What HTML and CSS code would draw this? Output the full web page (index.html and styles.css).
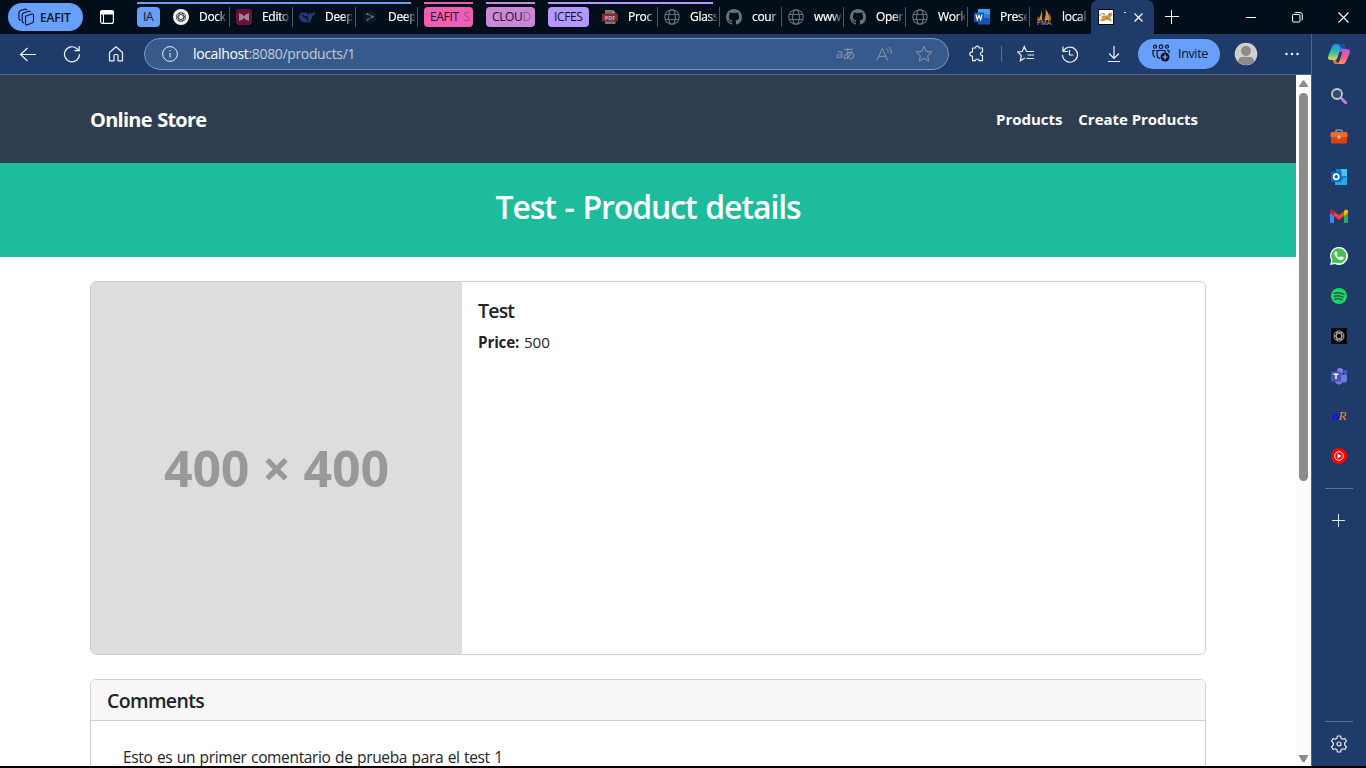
FILE: index.html
```html
<!DOCTYPE html>
<html lang="en">
<head>
<meta charset="utf-8">
<title>Test - Product details</title>
<link rel="stylesheet" href="styles.css">
</head>
<body>
<svg class="defs" width="0" height="0">
  <symbol id="globe" viewBox="0 0 16 16"><g fill="none" stroke="#687279" stroke-width="1.1"><circle cx="8" cy="8" r="7.3"/><ellipse cx="8" cy="8" rx="3.4" ry="7.3"/><path d="M1.2 5.5h13.6M1.2 10.5h13.6"/></g></symbol>
  <symbol id="github" viewBox="0 0 16 16"><path fill="#687279" d="M8 0C3.58 0 0 3.58 0 8c0 3.54 2.29 6.53 5.47 7.59.4.07.55-.17.55-.38 0-.19-.01-.82-.01-1.49-2.01.37-2.53-.49-2.69-.94-.09-.23-.48-.94-.82-1.13-.28-.15-.68-.52-.01-.53.63-.01 1.08.58 1.23.82.72 1.21 1.87.87 2.33.66.07-.52.28-.87.51-1.07-1.78-.2-3.64-.89-3.64-3.95 0-.87.31-1.59.82-2.15-.08-.2-.36-1.02.08-2.12 0 0 .67-.21 2.2.82A7.6 7.6 0 0 1 8 3.87c.68 0 1.36.09 2 .27 1.53-1.04 2.2-.82 2.2-.82.44 1.1.16 1.92.08 2.12.51.56.82 1.27.82 2.15 0 3.07-1.87 3.75-3.65 3.95.29.25.54.73.54 1.48 0 1.07-.01 1.93-.01 2.2 0 .21.15.46.55.38A8.01 8.01 0 0 0 16 8c0-4.42-3.58-8-8-8z"/></symbol>
  <symbol id="knot" viewBox="0 0 16 16"><g fill="none" stroke="currentColor" stroke-width="1.150"><rect x="4.600" y="1" width="6.800" height="14" rx="3.400"/><rect x="4.600" y="1" width="6.800" height="14" rx="3.400" transform="rotate(60 8 8)"/><rect x="4.600" y="1" width="6.800" height="14" rx="3.400" transform="rotate(120 8 8)"/></g></symbol>
</svg>

<div class="browser">
  <header class="tabstrip">
    <div class="workspace">
      <svg width="18" height="18" viewBox="0 0 18 18" fill="none" stroke="#071427" stroke-width="1.1" stroke-linejoin="round"><path d="M8.500 8.200 14.800 6q1.700-.4 1.700 1.200v6q0 1-1 1.500l-5 2q-2 .6-2-1.200z"/><path d="M7 15 5.200 14V7.200q0-1.600 1.300-2.200l5.500-2 1.500.8M3.600 12.500 1.900 11.200V4.800q0-1.400 1.200-2L8.500 1l1.500.7"/></svg>
      <span>EAFIT</span>
    </div>
    <svg class="tab-actions" width="16" height="16" viewBox="0 0 16 16"><rect x="1.600" y="1.600" width="12.800" height="12.800" rx="2" fill="none" stroke="#fff" stroke-width="1.200"/><path d="M1.500 3q0-1.500 1.500-1.500h10q1.500 0 1.500 1.500v2h-13zM4.500 5v9.500" fill="#fff" stroke="#fff"/></svg>

    <div class="group group-blue">
      <span class="chip chip-ia">IA</span>
      <div class="tab tab-wide"><svg width="16" height="16" viewBox="0 0 16 16" color="#333"><circle cx="8" cy="8" r="8" fill="#f5f5f5"/><use href="#knot" x="2.500" y="2.500" width="11" height="11"/></svg><span>Dock</span></div>
      <div class="tab tab-wide"><svg width="16" height="16" viewBox="0 0 16 16"><rect width="16" height="16" rx="3" fill="#6d1037"/><path fill="#98848e" d="m3 4 3.300 1.500L8 7.300l1.700-1.800L13 4v8l-3.200-1.200L8 9l-1.800 1.800L3 12z"/></svg><span>Edito</span></div>
      <div class="tab tab-wide"><svg width="16" height="16" viewBox="0 0 16 16"><path fill="#233979" d="M0 7.500C.2 4 3 3 6 3.800l1-.9 1.200 1.500c1.400.8 2.200 2 3 3.100-1.400-.5-1.800-2.300-1.300-4.200.7 1.200 1.700 1.500 2.700 1.300C13.300 3.600 14.500 3.300 16 2.800c-.1 2.900-1.100 4.100-3 4.300.2 2.600-.7 4.200-2 5.300l1.600 1.200c-1.500.3-2.700-.1-3.600-.7-4.500 1.300-8.700-.5-9-5.400z"/><path d="M2.800 6.400c3.200.2 4.800 4 7 4.800M7 7.200l1.800 1.600" stroke="#07111d" stroke-width="1.100" fill="none"/></svg><span>Deep</span></div>
      <div class="tab"><svg width="16" height="16" viewBox="0 0 16 16"><path fill="#0a1c2c" d="m8 1 6 3.300v7.200L8 15l-6-3.500V4.300z"/><path d="m5.500 5 5 2.800-5 3" fill="none" stroke="#59646c"/><g fill="#6c7880"><circle cx="5.500" cy="5" r="1.100"/><circle cx="10.500" cy="7.800" r="1.200"/><circle cx="5.500" cy="10.800" r="1"/></g></svg><span>Deep</span></div>
    </div>
    <div class="group group-pink"><span class="chip">EAFIT <i>S</i></span></div>
    <div class="group group-orchid"><span class="chip">CLOU<i>D</i></span></div>
    <div class="group group-violet">
      <span class="chip chip-icfes">ICFES</span>
      <div class="tab"><svg width="16" height="16" viewBox="0 0 16 16"><path d="M3 1h8l2.500 3v11H3z" fill="#727679"/><path d="M11 1v3h2.500" fill="#ad9d9d"/><rect y="4.500" width="16" height="8" rx=".8" fill="#842b31"/><text x="8" y="10.800" text-anchor="middle" class="pdf-label">PDF</text></svg><span>Proc</span></div>
      <div class="tab"><svg width="16" height="16"><use href="#globe"/></svg><span>Glass</span></div>
    </div>
    <div class="tab"><svg width="16" height="16"><use href="#github"/></svg><span>cour</span></div>
    <div class="tab"><svg width="16" height="16"><use href="#globe"/></svg><span>www</span></div>
    <div class="tab"><svg width="16" height="16"><use href="#github"/></svg><span>Oper</span></div>
    <div class="tab"><svg width="16" height="16"><use href="#globe"/></svg><span>Work</span></div>
    <div class="tab"><svg width="16" height="16" viewBox="0 0 16 16"><path fill="#3ba4ea" d="M4 0h12v5H4z"/><path fill="#2680d2" d="M4 5h12v4H4z"/><path fill="#1854b1" d="M4 9h12v6.500H4z"/><rect y="3.500" width="10" height="9.500" fill="#1551ae"/><path d="m2 5.700 1.300 5L5 6.300l1.700 4.400 1.300-5" fill="none" stroke="#fff" stroke-width="1.200"/></svg><span>Prese</span></div>
    <div class="tab last-tab"><svg width="16" height="16" viewBox="0 0 16 16"><path fill="#e58a2b" d="M5.500 1q1.200 5 .5 10H2q3.200-4 3.500-10zM9.500 0q4.200 5 3.800 11H8q2.500-4 1.500-11z"/><path fill="#b9631b" d="M13 4q2.200 3 2.200 7h-2zM2.500 6v5H.8z"/><text x="8" y="15.500" text-anchor="middle" class="boat-label">PMA</text></svg><span>local</span></div>
    <div class="active-tab">
      <svg width="16" height="16" viewBox="0 0 16 16"><rect width="16" height="16" fill="#080808"/><rect x="1" y="1" width="14" height="14" fill="#fff"/><path d="m3 8 2-1.500h4l2-1L11 3.200l1.500.8 1.500-.4.300 3-1.800 1.700.5 2 1.300 2.200-2.800-.8-2.700-1-3.500 1.500H3l2-2z" fill="#c79b52"/><path d="M1.500 7 4 4.500l3 1M2 11.500l3-1.500M8 8l2 2M10 5l2 1" stroke="#594124" stroke-width=".7" fill="none"/></svg>
      <span class="title-tip"></span>
      <svg class="tab-close" width="11" height="11" viewBox="0 0 11 11"><path d="m1.500 1.500 8 8m0-8-8 8" stroke="#fff" stroke-width="1.200"/></svg>
    </div>
    <svg class="new-tab" width="14" height="14" viewBox="0 0 14 14"><path d="M0 6.500h14M6.500 0v14" stroke="#fff"/></svg>
    <div class="window-controls">
      <svg width="10" height="10"><path d="M0 5.500h10" stroke="#fff"/></svg>
      <svg width="11" height="11" fill="none" stroke="#fff"><rect x=".5" y="2.500" width="7.500" height="7.500" rx="1"/><path d="M2.500 1q.4-.5 1-.5H8Q10.300.5 10.300 3v4.500q0 .6-.5 1"/></svg>
      <svg width="11" height="11"><path d="m.5.500 10 10m0-10-10 10" stroke="#fff" stroke-width="1.100"/></svg>
    </div>
  </header>

  <div class="workarea">
    <div class="viewport">
      <div class="toolbar">
        <div class="nav-icons">
          <svg width="18" height="18" viewBox="0 0 18 18"><path d="M17 9.500H2M8.500 3l-7 6.500 7 6.500"/></svg>
          <svg width="18" height="18" viewBox="0 0 18 18"><path d="M16.500 9.300A7.500 7.500 0 1 1 14 3.700L16 5.500M16.200 1v4.600h-4.700"/></svg>
          <svg width="18" height="18" viewBox="0 0 18 18"><path d="M2.500 7.500 9 1.800l6.500 5.700v8.300H11v-5.300q0-1-1-1H8q-1 0-1 1v5.300H2.500z" stroke-linejoin="round"/></svg>
        </div>
        <div class="address">
          <svg width="16" height="16" viewBox="0 0 16 16"><circle cx="8" cy="8" r="7.400"/><path d="M8 7v4.500M8 4v1.300"/></svg>
          <span class="url"><b>localhost</b>:8080/products/1</span>
          <span class="translate">aあ</span>
          <svg class="read-aloud" width="17" height="16" viewBox="0 0 17 16"><path d="m1 14.500 5.300-12 5.300 12M3 10.300h6.700M10.500 2.500q2 1.500 1.600 4M13 1q3 2.500 2 6.500"/></svg>
          <svg class="fav" width="18" height="18" viewBox="0 0 18 18"><path d="m9 1.500 2.200 5 5.400.5-4 3.700 1.100 5.400L9 13.300l-4.700 2.800 1.100-5.400-4-3.700 5.400-.5z"/></svg>
        </div>
        <div class="tools">
          <svg width="18" height="18" viewBox="0 0 18 18"><path d="M4.500 3h3q0-1.800 1.800-1.800T11 3h3.500v4q-2 0-2 1.800t2 1.800v5H11q0-1.600-1.700-1.600T7.500 15.600h-3v-4.500q-2.700 0-2.700-2.100t2.700-2.100z" stroke-linejoin="round"/></svg>
          <span class="bar"></span>
          <svg width="18" height="18" viewBox="0 0 18 18"><path d="M9.500 6.500 7.300 1.500l-2 5L.8 7l3.500 3.700-1 5.100L8 13M9.500 6.500H17M10.500 10H17M9.500 13.500H17"/></svg>
          <svg width="18" height="18" viewBox="0 0 18 18"><path d="M2.200 6.500A7.500 7.500 0 1 1 1.500 10M2 1.500v5h5M8.500 5v5h4"/></svg>
          <svg width="18" height="18" viewBox="0 0 18 18"><path d="M9 1v12M4 8.500l5 5 5-5M3 16.500h12"/></svg>
        </div>
        <div class="invite">
          <svg width="18" height="18" viewBox="0 0 18 18" fill="none" stroke="#071427" stroke-width="1.200"><circle cx="3" cy="2.700" r="1.500"/><circle cx="9" cy="2.700" r="1.800"/><circle cx="15" cy="2.700" r="1.500"/><path d="M8 14.500Q5 14 5 11V6.500h8v2M3 6.500H1V10q0 2.500 2 3.200M15 6.500h2V9"/><circle cx="13" cy="13" r="4.500" fill="#071427" stroke="none"/><path d="M13 10.500v5M10.500 13h5" stroke="#8db5ff"/></svg>
          <span>Invite</span>
        </div>
        <svg class="avatar" width="24" height="24" viewBox="0 0 24 24"><circle cx="12" cy="12" r="11.300" fill="#d2d0ce"/><circle cx="12" cy="9" r="5" fill="#8d8b89"/><path d="M4 20q0-5 4.500-5h7q4.500 0 4.500 5-8 6.500-16 0z" fill="#8d8b89"/></svg>
        <svg class="more" width="14" height="4"><g fill="#fff"><circle cx="1.500" cy="2" r="1.200"/><circle cx="7" cy="2" r="1.200"/><circle cx="12.500" cy="2" r="1.200"/></g></svg>
      </div>

      <div class="page-frame">
        <main class="page">
          <nav class="navbar">
            <span class="brand">Online Store</span>
            <div class="links"><span>Products</span><span class="create">Create Products</span></div>
          </nav>
          <div class="masthead"><h2>Test - Product details</h2></div>
          <div class="content">
            <section class="card product">
              <div class="placeholder"><span>400 × 400</span></div>
              <div class="product-body">
                <h5>Test</h5>
                <p><b>Price:</b> <span>500</span></p>
              </div>
            </section>
            <section class="card comments">
              <h5 class="card-header">Comments</h5>
              <p class="comment">Esto es un primer comentario de prueba para el test 1</p>
            </section>
          </div>
        </main>
        <div class="scrollbar">
          <svg width="9" height="7" viewBox="0 0 9 7"><path d="M3.800.5h1.400L9 6v1H0V6z" fill="#8b8b8b"/></svg>
          <div class="thumb"></div>
          <svg width="9" height="7" viewBox="0 0 9 7"><path d="M3.500 7h2L9 1V0H0v1z" fill="#8b8b8b"/></svg>
        </div>
      </div>
    </div>

    <aside class="sidebar">
      <svg class="copilot" width="24" height="24" viewBox="0 0 24 24"><defs><linearGradient id="cool" x2="0" y2="1"><stop stop-color="#208de8"/><stop offset=".5" stop-color="#2abfaf"/><stop offset="1" stop-color="#ebd63a"/></linearGradient><linearGradient id="warm" x2="0" y2="1"><stop stop-color="#b65bec"/><stop offset=".55" stop-color="#f7588d"/><stop offset="1" stop-color="#ff9b50"/></linearGradient></defs><path d="M8 2h7q2 0 2.500 2l.7 2.500H15q-1.500 0-2 1.500l-2.500 8Q10 18 8 18H4q-4 0-2.700-4L5 4.500Q6 2 8 2z" fill="url(#cool)"/><path d="M11.500 2H15q2 0 2.500 2l.7 2.500h-2.700q-1.500 0-2-1.500z" fill="#174da5"/><path d="M16 22H9q-2 0-2.500-2L6 18h2q2 0 2.500-2L13 8.500Q13.500 7 15 7h4.500q4.500 0 3.200 4L19 19.500q-1 2.500-3 2.500z" fill="url(#warm)"/><path d="M6 18h2q2 0 2.500-2l.5-1.500 1 5Q11.500 22 9.500 22 7 22 6.500 20z" fill="#f16a42"/><path d="m10.500 16 2-6 3-.5-3 9.500q-.5 1.500-2 1.800-1.500-.8-1.500-2.800 1-.5 1.500-2z" fill="#1e3b69"/></svg>
      <div class="apps">
        <svg width="18" height="18" viewBox="0 0 18 18"><circle cx="7" cy="7" r="5" fill="#314d72" stroke="#c7c7c7" stroke-width="1.800"/><path d="m10.500 10.500 2.500 2.500" stroke="#bbb" stroke-width="2"/><path d="m12.700 12.700 3 3" stroke="#b77de8" stroke-width="3" stroke-linecap="round"/></svg>
        <svg width="18" height="18" viewBox="0 0 18 18"><path d="M6 5V3.500Q6 3 7 3h4q1 0 1 .5V5" fill="none" stroke="#a9b4ba" stroke-width="1.200"/><path d="M.5 6.500Q.5 5 2 5h14q1.500 0 1.500 1.500V10H.5z" fill="#f36a27"/><path d="M1 10h16v5.500q0 1-1 1H2q-1 0-1-1z" fill="#d8430e"/><circle cx="9" cy="10" r="1.800" fill="#d5c1b8"/></svg>
        <svg width="18" height="18" viewBox="0 0 18 18"><path d="M6 2h11v15H6z" fill="#1386d5"/><path d="M11 2h6v7h-6z" fill="#4ac3f2"/><path d="m5 10 6 3 6-3v8H5z" fill="#2aa9e8"/><rect x="1" y="4.500" width="10.500" height="10.500" rx="1" fill="#0869bd"/><circle cx="6.200" cy="9.700" r="2.600" fill="none" stroke="#fff" stroke-width="1.700"/></svg>
        <svg width="18" height="18" viewBox="0 0 18 18"><path d="M0 4h4v12H1q-1 0-1-1z" fill="#4285f4"/><path d="M14 4h4v11q0 1-1 1h-3z" fill="#34a853"/><path d="M4 4.500 9 8l5-3.500V9l-5 4-5-4z" fill="#ea4335"/><path d="M0 5q0-3.500 3-2l1 1v5L0 6z" fill="#c5221f"/><path d="M18 5q0-3.500-3-2l-1 1v5l4-3z" fill="#fbbc04"/></svg>
        <svg width="18" height="18" viewBox="0 0 18 18"><path d="m0 18 1.200-4.600A9 9 0 1 1 5 17z" fill="#fff"/><path d="m1.700 16.300.9-3.200a7.500 7.500 0 1 1 2.900 2.500z" fill="#3fc351"/><path d="M5.300 4.500q.8-.6 1.400.2l.8 1.800q.1.500-.7 1.300 1 1.900 3 2.700l1-1q.4-.4.900-.1l1.700.9q.5.400 0 1.400-1 1.900-3.300 1.300Q5.700 11.500 4.600 7.500q-.4-1.800.7-3z" fill="#fff"/></svg>
        <svg width="16" height="16" viewBox="0 0 16 16"><circle cx="8" cy="8" r="8" fill="#1ed760"/><path d="M3 5.300q5.300-1.500 10 1M3.500 8.300q4.600-1.200 8.500.9M4 11q3.700-1 7 .8" stroke="#1b4e4e" fill="none" stroke-width="1.400" stroke-linecap="round"/></svg>
        <svg width="16" height="16" viewBox="0 0 16 16" color="#b7b7b7"><rect width="16" height="16" fill="#020407"/><use href="#knot" x="2" y="2" width="12" height="12"/></svg>
        <svg width="18" height="18" viewBox="0 0 18 18"><circle cx="10" cy="4" r="3" fill="#7b83eb"/><circle cx="15.200" cy="5" r="2" fill="#5059c9"/><path d="M12 7.500h5v6q-1 3-4 2zM5 7.500h8v7q-1.500 3-4 3-3 0-4-3z" fill="#6f78df"/><rect x="1" y="4.500" width="10" height="10" rx="1" fill="#4b53bc"/><path d="M3.500 7.200h5M6 7v5" stroke="#fff" stroke-width="1.500"/></svg>
        <span class="word-ref"><b>w</b><i>R</i></span>
        <svg width="16" height="16" viewBox="0 0 16 16"><circle cx="8" cy="8" r="8" fill="#f00"/><circle cx="8" cy="8" r="4.300" fill="none" stroke="#fff"/><path d="m6.500 5.500 4 2.500-4 2.500z" fill="#fff"/></svg>
      </div>
      <span class="divider"></span>
      <svg class="add-app" width="13" height="13"><path d="M0 6.500h13M6.500 0v13" stroke="#dfe6f0"/></svg>
      <span class="divider divider-bottom"></span>
      <svg class="settings" width="18" height="18" viewBox="0 0 18 18" fill="none" stroke="#e8edf4" stroke-width="1.200" stroke-linejoin="round"><path d="M7.500 1h3l.6 2.300 1.500.9 2.300-.7 1.500 2.600L14.700 8v2l1.700 1.900-1.500 2.600-2.300-.7-1.500.9-.6 2.300h-3l-.6-2.300-1.500-.9-2.300.7-1.500-2.600L3.300 10V8L1.600 6.100l1.500-2.600 2.300.7 1.500-.9z"/><circle cx="9" cy="9" r="2"/></svg>
    </aside>
  </div>
</div>
</body>
</html>
```
FILE: styles.css
```css
* { box-sizing: border-box; }
body { margin: 0; font-family: "Open Sans", "Noto Sans CJK JP", sans-serif; color: #212529; background: #000; }
svg { display: block; flex: none; }
.defs { position: absolute; }
h2, h5, p { margin: 0; }
.browser { width: 1366px; height: 768px; overflow: hidden; display: flex; flex-direction: column; padding-bottom: 2px; background: #000; }

/* Tab strip */
.tabstrip { height: 34px; flex: none; display: flex; background: #020e19; color: #fff; font-size: 12px; white-space: nowrap; }
.workspace { width: 75px; height: 28px; margin: 3px 16px 0 8px; padding-left: 9px; border-radius: 14px; background: #689ffa; color: #071427; display: flex; align-items: center; gap: 5px; font-weight: 600; letter-spacing: -0.2px; }
.tab-actions { margin: 9px 22px 0 0; }
.group { display: flex; height: 34px; border-top: 2px solid transparent; position: relative; margin-right: 13px; }
.group::before { content: ""; position: absolute; left: 0; right: 0; top: 0; height: 2px; background: var(--accent); }
.group-blue { --accent: #689ffa; margin-right: 6px; }
.group-blue::before { right: 7px; }
.group-pink { --accent: #ef5db5; }
.group-orchid { --accent: #cd87d8; }
.group-violet { --accent: #b497ff; margin-right: 0; }
.group-violet::before { right: 7px; }
.chip { width: 49px; height: 20px; margin-top: 5px; padding-left: 6px; border-radius: 4px; background: var(--accent); color: #10151e; line-height: 19px; letter-spacing: -0.35px; word-spacing: 2px; }
.chip i { font-style: normal; opacity: 0.35; }
.chip-ia { width: 23px; margin-right: 7px; }
.chip-icfes { width: 41px; margin-right: 7px; }
.tab { width: 62px; height: 20px; margin-top: 7px; padding-left: 6px; display: flex; align-items: center; gap: 10px; border-right: 1px solid #4b555e; }
.group .tab { margin-top: 5px; }
.tab-wide { width: 63px; }
.tab span { width: 27px; letter-spacing: -0.3px; line-height: 20px; -webkit-text-stroke: 0.2px #fff; mask-image: linear-gradient(90deg, #000 65%, #0003 100%); }
.last-tab { width: 61px; border: 0; }
.last-tab span { width: 25px; }
.pdf-label { font: 700 5.500px "Open Sans", sans-serif; fill: #c8c0c0; }
.boat-label { font: 700 6.500px "Open Sans", sans-serif; fill: #777b9a; }
.active-tab { width: 63px; height: 34px; padding: 9px 0 0 7px; display: flex; background: #1e3b69; border-radius: 7px 7px 0 0; }
.title-tip { width: 2px; height: 1px; margin: 3px 7px 0 10px; background: #dbe2ec; }
.tab-close { margin-top: 3px; }
.new-tab { margin: 10px 67px 0 11px; }
.window-controls { display: flex; gap: 35.500px; padding-top: 12px; }

/* Toolbar */
.workarea { display: flex; flex: 1; min-height: 0; }
.viewport { width: 1312px; display: flex; flex-direction: column; border-right: 1px solid #486386; background: #1e3b69; }
.toolbar { height: 41px; flex: none; display: flex; align-items: center; padding: 0 0 1px 19px; border-bottom: 1px solid #526c8e; color: #fff; }
.toolbar svg { fill: none; }
.nav-icons, .tools { display: flex; align-items: center; stroke: #edf2f9; stroke-width: 1.200; }
.nav-icons { gap: 26px; margin-right: 19px; }
.address { width: 805px; height: 32px; border: 1px solid #7d96b9; border-radius: 16px; background: #375a8d; display: flex; align-items: center; padding-left: 17px; stroke: #e8eef5; }
.url { width: 643px; margin-left: 15px; font-size: 14px; letter-spacing: -0.35px; color: #c0cbd8; }
.url b { font-weight: 400; color: #fff; }
.translate { width: 20px; margin-right: 20px; font-size: 13px; line-height: 18px; color: #8c98a6; white-space: nowrap; letter-spacing: -1px; margin-top: -2px; }
.read-aloud, .fav { stroke: #8c98a6; }
.fav { margin-left: 22px; }
.tools { width: 156px; gap: 26px; margin: 0 14px 0 19px; }
.tools .bar { width: 1px; height: 16px; background: #526d92; margin: 0 -11px 0 -11px; }
.invite { width: 82px; height: 30px; border-radius: 15px; background: #689ffa; color: #071427; font-size: 12.500px; letter-spacing: -0.35px; display: flex; align-items: center; padding: 0 0 1px 14px; gap: 8px; }
.avatar { margin: 0 27px 0 14px; }

/* Store page */
.page-frame { flex: 1; min-height: 0; display: flex; background: #fff; }
.page { width: 1296px; overflow: hidden; }
.navbar { height: 88px; padding: 0 98px 0 90px; display: flex; align-items: center; justify-content: space-between; background: #2e3e50; color: #fff; }
.brand { font-size: 20px; font-weight: 700; letter-spacing: -0.75px; word-spacing: 1px; line-height: 30px; margin-top: 1px; }
.links { display: flex; gap: 16px; font-size: 15px; font-weight: 700; letter-spacing: -0.03px; line-height: 24px; }
.masthead { height: 94px; padding-top: 24px; background: #1cbc9c; color: #fff; text-align: center; }
.masthead h2 { font-size: 32px; line-height: 38px; margin-top: 1px; font-weight: 600; letter-spacing: -1.1px; word-spacing: 1.500px; }
.content { padding: 24px 90px 0; }
.card { border: 1px solid #cfcfcf; border-radius: 6px; background: #fff; overflow: hidden; }
.product { height: 374px; display: flex; margin-bottom: 24px; }
.placeholder { width: 371px; display: flex; justify-content: center; align-items: center; background: #ddd; color: #999; font-size: 50px; font-weight: 700; line-height: 68px; padding-bottom: 1px; letter-spacing: -0.1px; }
.product-body { padding: 16px; }
.product-body h5 { font-size: 19.500px; line-height: 24px; font-weight: 600; letter-spacing: -0.8px; margin-top: 1px; }
.product-body p { margin-top: 7px; font-size: 15.200px; line-height: 24px; letter-spacing: -0.15px; word-spacing: 1px; }
.comments { height: 140px; }
.card-header { height: 41px; padding: 9px 16px; background: #f7f7f7; border-bottom: 1px solid #cfcfcf; font-size: 19.500px; line-height: 24px; font-weight: 600; letter-spacing: -0.65px; }
.comment { padding: 24px 32px; font-size: 15.500px; line-height: 24px; letter-spacing: -0.35px; word-spacing: 0.800px; white-space: nowrap; }
.scrollbar { width: 15px; padding: 5px 0 4px; display: flex; flex-direction: column; align-items: center; background: #fcfcfc; }
.thumb { width: 9px; height: 388px; margin: 6px 0 auto; border-radius: 5px; background: #8b8b8b; }

/* Sidebar */
.sidebar { width: 54px; display: flex; flex-direction: column; align-items: center; background: #1e3b69; }
.copilot { margin: 8px 0 10px; }
.apps { display: grid; grid-auto-rows: 40px; place-items: center; }
.word-ref { font: 12px "Liberation Serif", serif; color: #ef8d26; display: flex; align-items: baseline; }
.word-ref b { color: #1010e8; font-family: "Liberation Sans", sans-serif; font-style: italic; font-size: 10px; }
.word-ref i { font-size: 13px; margin-left: -1px; }
.divider { width: 28px; height: 1px; flex: none; margin-top: 12px; background: #5b7393; }
.add-app { margin: 25px 1px 0 0; }
.divider-bottom { margin-top: auto; }
.settings { margin: 13px 0; }
```
